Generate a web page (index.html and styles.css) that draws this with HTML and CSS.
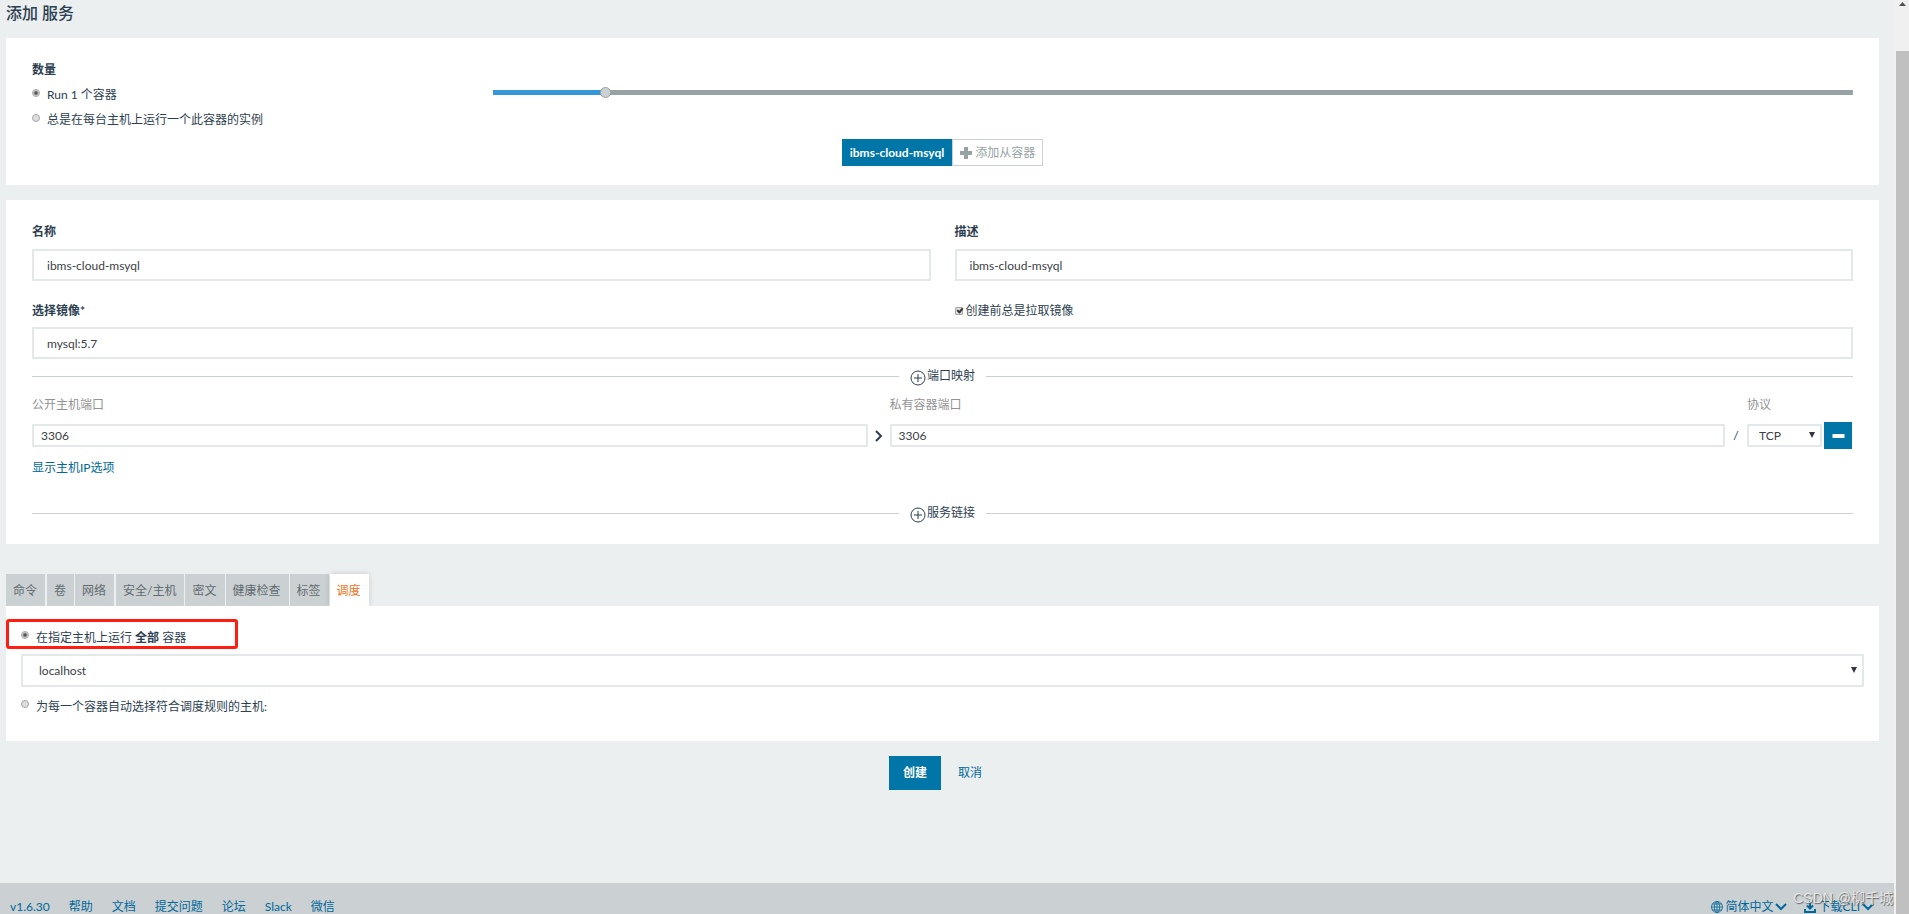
FILE: index.html
```html
<!DOCTYPE html>
<html lang="zh-CN">
<head>
<meta charset="utf-8">
<title>添加服务</title>
<link rel="stylesheet" href="styles.css">
</head>
<body>
<svg class="sprite" aria-hidden="true">
  <symbol id="plus-circle" viewBox="0 0 16 16"><circle cx="8" cy="8" r="7" fill="none" stroke="currentColor"/><path d="M8 4v8M4 8h8" fill="none" stroke="currentColor"/></symbol>
  <symbol id="chevron-down" viewBox="0 0 12 8"><path d="M1 1l5 5 5-5" fill="none" stroke="currentColor" stroke-width="2"/></symbol>
</svg>
<div class="app">
  <div class="page">
    <main class="content">
      <h1 class="title">添加 服务</h1>

      <section class="panel scale">
        <div class="scale-grid">
          <fieldset class="choices">
            <legend class="label">数量</legend>
            <label class="choice"><input class="radio" type="radio" name="scale" checked><span>Run 1 个容器</span></label>
            <label class="choice"><input class="radio" type="radio" name="scale"><span>总是在每台主机上运行一个此容器的实例</span></label>
          </fieldset>
          <input class="slider" type="range" min="0" max="38" value="3" aria-label="容器数量" style="--fill: 8%">
        </div>
        <div class="containers">
          <button class="container-tab active" type="button">ibms-cloud-msyql</button>
          <button class="container-tab" type="button"><svg class="plus" viewBox="0 0 12 12"><path d="M6 0v12M0 6h12" stroke="currentColor" stroke-width="4"/></svg>添加从容器</button>
        </div>
      </section>

      <section class="panel details">
        <div class="fields">
          <div class="field"><label class="label" for="name">名称</label><input class="text" id="name" type="text" value="ibms-cloud-msyql"></div>
          <div class="field"><label class="label" for="desc">描述</label><input class="text" id="desc" type="text" value="ibms-cloud-msyql"></div>
        </div>
        <div class="fields image-head">
          <label class="label" for="image">选择镜像*</label>
          <label class="pull"><input class="check" type="checkbox" checked><span>创建前总是拉取镜像</span></label>
        </div>
        <input class="text" id="image" type="text" value="mysql:5.7">

        <div class="divider"><button class="add" type="button"><svg class="add-icon"><use href="#plus-circle"/></svg>端口映射</button></div>
        <div class="ports">
          <label class="hint public" for="public">公开主机端口</label>
          <label class="hint private" for="private">私有容器端口</label>
          <label class="hint protocol" for="protocol">协议</label>
          <input class="text small public" id="public" type="text" value="3306">
          <svg class="arrow" viewBox="0 0 8 12"><path d="M1 1l5 5-5 5" fill="none" stroke="currentColor" stroke-width="2"/></svg>
          <input class="text small private" id="private" type="text" value="3306">
          <span class="slash">/</span>
          <div class="select-box"><select class="text small select" id="protocol"><option>TCP</option></select></div>
          <button class="remove" type="button" aria-label="删除"><svg class="minus" viewBox="0 0 12 4"><rect width="12" height="4" fill="currentColor"/></svg></button>
        </div>
        <a class="link" href="#">显示主机IP选项</a>
        <div class="divider services"><button class="add" type="button"><svg class="add-icon"><use href="#plus-circle"/></svg>服务链接</button></div>
      </section>

      <nav class="tabs">
        <button class="tab wide-gap" type="button">命令</button>
        <button class="tab" type="button">卷</button>
        <button class="tab wide-gap" type="button">网络</button>
        <button class="tab" type="button">安全/主机</button>
        <button class="tab" type="button">密文</button>
        <button class="tab" type="button">健康检查</button>
        <button class="tab" type="button">标签</button>
        <button class="tab current" type="button">调度</button>
      </nav>
      <section class="panel schedule">
        <div class="highlight"></div>
        <label class="choice"><input class="radio" type="radio" name="host" checked><span>在指定主机上运行 <b>全部</b> 容器</span></label>
        <div class="select-box"><select class="text select host" aria-label="主机"><option>localhost</option></select></div>
        <label class="choice"><input class="radio" type="radio" name="host"><span>为每一个容器自动选择符合调度规则的主机:</span></label>
      </section>

      <div class="actions">
        <button class="create" type="submit">创建</button>
        <a class="link" href="#">取消</a>
      </div>
    </main>

    <footer class="footer">
      <a class="link" href="#">v1.6.30</a>
      <a class="link" href="#">帮助</a>
      <a class="link" href="#">文档</a>
      <a class="link" href="#">提交问题</a>
      <a class="link" href="#">论坛</a>
      <a class="link" href="#">Slack</a>
      <a class="link" href="#">微信</a>
      <div class="footer-right">
        <a class="link menu" href="#"><svg class="globe" viewBox="0 0 12 12"><g fill="none" stroke="currentColor" stroke-width=".8"><circle cx="6" cy="6" r="5.5"/><ellipse cx="6" cy="6" rx="2.7" ry="5.5"/><path d="M6 0v12M0 6h12M1 3h10M1 9h10"/></g></svg>简体中文<svg class="chevron"><use href="#chevron-down"/></svg></a>
        <a class="link menu" href="#"><svg class="download" viewBox="0 0 12 12"><path d="M6 0v7M3 4.500l3 3 3-3M1 8v3h10V8" fill="none" stroke="currentColor" stroke-width="2"/></svg>下载CLI<svg class="chevron"><use href="#chevron-down"/></svg></a>
      </div>
    </footer>
    <div class="watermark">CSDN @柳千城</div>
  </div>
  <div class="scrollbar"><svg class="scroll-up" viewBox="0 0 7 4"><path d="M0 4L3.500 0 7 4z" fill="#505050"/></svg><div class="thumb"></div></div>
</div>
</body>
</html>
```

FILE: styles.css
```css
*, *::before, *::after { box-sizing: border-box; }

body {
  margin: 0;
  overflow: hidden;
  background: #ebeff0;
  color: #2c3e50;
  font: 12px/20px Lato, "Noto Sans CJK SC", sans-serif;
}

button, input, select { font: inherit; color: inherit; margin: 0; }
button { border: 0; padding: 0; cursor: pointer; }
.sprite { display: none; }

.app { display: flex; height: 100vh; overflow: hidden; }
.page { position: relative; flex: 1; display: flex; flex-direction: column; }
.content { flex: 1; padding: 0 15px 0 6px; }

.title { margin: 0; height: 38px; font-size: 16px; line-height: 26px; font-weight: 500; }
.panel { background: #fff; }
.label { display: block; padding: 0; font-weight: 700; }
.link { color: #00689a; text-decoration: none; }

/* quantity */
.scale { padding: 22px 26px 19px; }
.scale-grid { display: grid; grid-template-columns: 1fr 3fr; gap: 8px; }
.choices { margin: 0; padding: 0; border: 0; }
.choice { display: flex; align-items: flex-start; gap: 7px; height: 25px; line-height: 24px; }
.choices .label { margin-bottom: 3px; }

.radio, .check {
  appearance: none;
  flex: none;
  width: 8px;
  height: 8px;
  border: 1px solid #a6a6a6;
  background: #dedede;
}
.radio { margin-top: 6px; border-radius: 50%; }
.radio:checked { background: radial-gradient(circle, #555 0 1px, #e4e4e4 3px); }

.slider {
  --fill: 0%;
  appearance: none;
  align-self: start;
  width: 100%;
  height: 11px;
  margin-top: 27px;
  border-radius: 3px;
  background: linear-gradient(to right, #3497da var(--fill), #98a2a5 var(--fill)) center / 100% 5px no-repeat;
}
.slider::-webkit-slider-thumb {
  appearance: none;
  width: 11px;
  height: 11px;
  border: 1px solid #98a2a5;
  border-radius: 50%;
  background: #cbd0d2;
}

.containers { display: flex; justify-content: center; margin-top: 6px; }
.container-tab {
  display: flex;
  align-items: center;
  gap: 3px;
  height: 27px;
  padding: 0 7px;
  border: 1px solid #cbd0d2;
  background: #fff;
  color: #98a2a5;
}
.container-tab.active { padding: 0 8px; border: 0; background: #0075a8; color: #fff; font-weight: 700; }
.plus { width: 12px; height: 12px; }

/* details */
.details { margin-top: 15px; padding: 22px 26px 21px; }
.fields { display: grid; grid-template-columns: 1fr 1fr; gap: 24px; }
.field .label { margin-bottom: 7px; }
.image-head { margin: 20px 0 6px; }
.pull { display: flex; align-items: center; gap: 3px; }
.check { position: relative; border-radius: 1px; }
.check:checked::after {
  content: "";
  position: absolute;
  left: 2px;
  top: -1px;
  width: 4px;
  height: 6px;
  border: solid #333;
  border-width: 0 2px 2px 0;
  transform: rotate(40deg);
}
.text {
  display: block;
  width: 100%;
  height: 32px;
  padding: 0 13px;
  border: 2px solid #e3e8e8;
  border-radius: 1px;
  background: #fff;
  color: #3b3f46;
  outline: 0;
}
.text.small { height: 23px; padding: 0 7px; }

.divider { display: flex; align-items: center; gap: 11px; height: 20px; margin-top: 7px; }
.divider::before, .divider::after { content: ""; flex: 1; height: 1px; background: #cbd0d2; }
.add { display: flex; align-items: center; gap: 1px; height: 20px; background: none; }
.add-icon { width: 16px; height: 16px; margin-top: 3px; }
.services { margin-top: 25px; }

.ports {
  display: grid;
  grid-template-columns: 1fr 22px 1fr 22px 75px 31px;
  grid-template-rows: 20px 27px;
  row-gap: 7px;
  align-items: center;
  margin: 9px 0;
}
.hint { color: #939393; }
.public { grid-column: 1; }
.private { grid-column: 3; }
.protocol { grid-column: 5; }
.arrow { width: 8px; height: 12px; justify-self: center; }
.slash { text-align: center; }
.remove { display: grid; place-items: center; width: 28px; height: 27px; margin-left: 2px; background: #0075a8; color: #fff; }
.minus { width: 13px; height: 4px; }

.select-box { position: relative; }
.select-box::after {
  content: "";
  position: absolute;
  right: 7px;
  top: 50%;
  margin-top: -4px;
  border: solid transparent;
  border-width: 6px 3px 0;
  border-top-color: #333642;
}
.select { appearance: none; }
.text.small.select { padding-left: 10px; }
.text.host { height: 33px; padding-left: 16px; }

/* tabs */
.tabs { display: flex; margin-top: 30px; }
.tab { height: 32px; padding: 1px 8px 0 7px; margin-right: 1px; background: #cbd0d2; color: #616b70; }
.tab.wide-gap { margin-right: 2px; }
.tab.current { background: #fff; color: #ec7423; box-shadow: 0 0 6px rgba(0, 0, 0, .15); }

.schedule { position: relative; padding: 19px 15px 22px; }
.schedule .choice { height: 29px; line-height: 26px; }
.schedule .select-box + .choice { height: 25px; margin-top: 7px; }
.highlight { position: absolute; left: 0; top: 13px; width: 232px; height: 30px; border: 3px solid #ff1d12; border-radius: 3px; }

.actions { display: flex; align-items: center; justify-content: center; gap: 17px; margin-top: 15px; padding-right: 14px; }
.create { width: 52px; height: 34px; background: #0075a8; color: #fff; font-weight: 700; }

/* footer */
.footer { display: flex; gap: 19px; height: 31px; padding: 14px 20px 0 10px; background: #cbd0d2; white-space: nowrap; overflow: hidden; }
.footer-right { display: flex; gap: 17px; margin-left: auto; }
.menu { display: flex; align-items: center; gap: 2px; height: 20px; }
.globe, .download { width: 12px; height: 12px; }
.chevron { width: 12px; height: 8px; }
.watermark {
  position: absolute;
  right: 1px;
  bottom: 6px;
  color: rgba(235, 237, 238, .9);
  font: 14px/20px "Liberation Sans", "Noto Sans CJK SC", sans-serif;
  text-shadow: 1px 1px 1px #666;
}

.scrollbar { display: flex; flex-direction: column; width: 15px; padding-left: 2px; background: #f0f0f0; }
.scroll-up { width: 7px; height: 4px; margin: 2px 3px 45px; }
.thumb { flex: 1; background: #c0c0c0; }
```
